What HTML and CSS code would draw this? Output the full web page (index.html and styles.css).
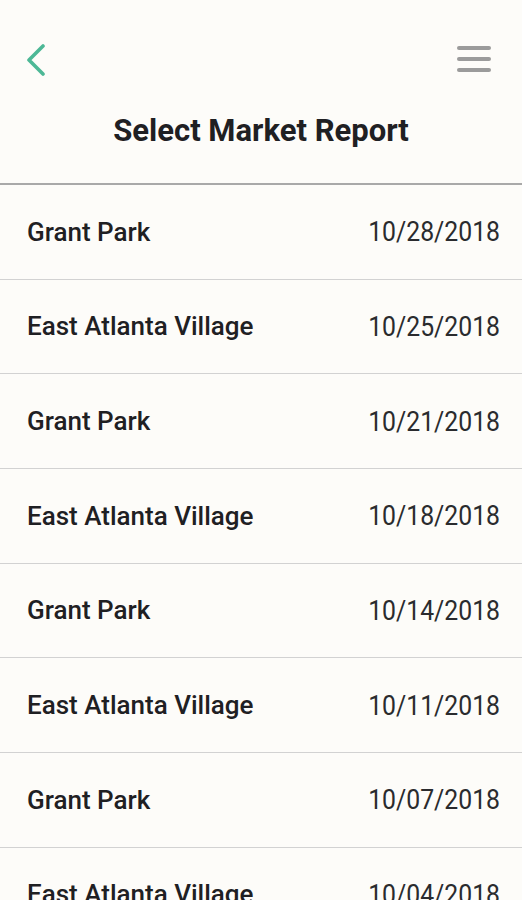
FILE: index.html
```html
<!DOCTYPE html>
<html>
<head>
<meta charset="utf-8">
<link rel="stylesheet" href="styles.css">
</head>
<body>
<div class="app">
  <header class="header">
    <div class="topbar">
      <svg class="back" width="20" height="32" viewBox="0 0 20 32"><polyline points="17,2 3,16 17,30" fill="none" stroke="#4db896" stroke-width="3.6" stroke-linecap="round" stroke-linejoin="round"/></svg>
      <svg class="menu" width="34" height="28" viewBox="0 0 34 28"><g stroke="#9b9b9b" stroke-width="4" stroke-linecap="round"><line x1="2" y1="3" x2="32" y2="3"/><line x1="2" y1="14" x2="32" y2="14"/><line x1="2" y1="25" x2="32" y2="25"/></g></svg>
    </div>
    <h1 class="title">Select Market Report</h1>
  </header>
  <ul class="list">
    <li class="row"><span class="name">Grant Park</span><span class="date">10/28/2018</span></li>
    <li class="row"><span class="name">East Atlanta Village</span><span class="date">10/25/2018</span></li>
    <li class="row"><span class="name">Grant Park</span><span class="date">10/21/2018</span></li>
    <li class="row"><span class="name">East Atlanta Village</span><span class="date">10/18/2018</span></li>
    <li class="row"><span class="name">Grant Park</span><span class="date">10/14/2018</span></li>
    <li class="row"><span class="name">East Atlanta Village</span><span class="date">10/11/2018</span></li>
    <li class="row"><span class="name">Grant Park</span><span class="date">10/07/2018</span></li>
    <li class="row"><span class="name">East Atlanta Village</span><span class="date">10/04/2018</span></li>
  </ul>
</div>
</body>
</html>
```
FILE: styles.css
```css
html, body {
  margin: 0;
  padding: 0;
  background: #fdfcf9;
}
body {
  font-family: Roboto, "Liberation Sans", sans-serif;
  color: #1f2023;
  overflow: hidden;
  height: 900px;
}
.app {
  width: 522px;
}
.header {
  border-bottom: 2px solid #a9a9a9;
  height: 185px;
  box-sizing: border-box;
  display: flex;
  flex-direction: column;
}
.topbar {
  display: flex;
  justify-content: space-between;
  align-items: center;
  padding: 42px 31px 0 26px;
  height: 34px;
}
.back { display: block; margin-top: 2px; }
.menu { display: block; }
.title {
  margin: 38px 0 0;
  text-align: center;
  font-size: 31px;
  font-weight: 700;
  line-height: 34px;
  letter-spacing: 0;
}
.list {
  list-style: none;
  margin: 0;
  padding: 0;
}
.row {
  height: 94.67px;
  box-sizing: border-box;
  border-bottom: 1px solid #d2d2d2;
  display: flex;
  justify-content: space-between;
  align-items: center;
  padding: 0 22px 0 27px;
}
.name {
  font-size: 26px;
  font-weight: 500;
}
.date {
  display: inline-block;
  font-size: 28px;
  font-weight: 400;
  color: #2a2b2e;
  transform: scaleX(0.885);
  transform-origin: right center;
}
```
